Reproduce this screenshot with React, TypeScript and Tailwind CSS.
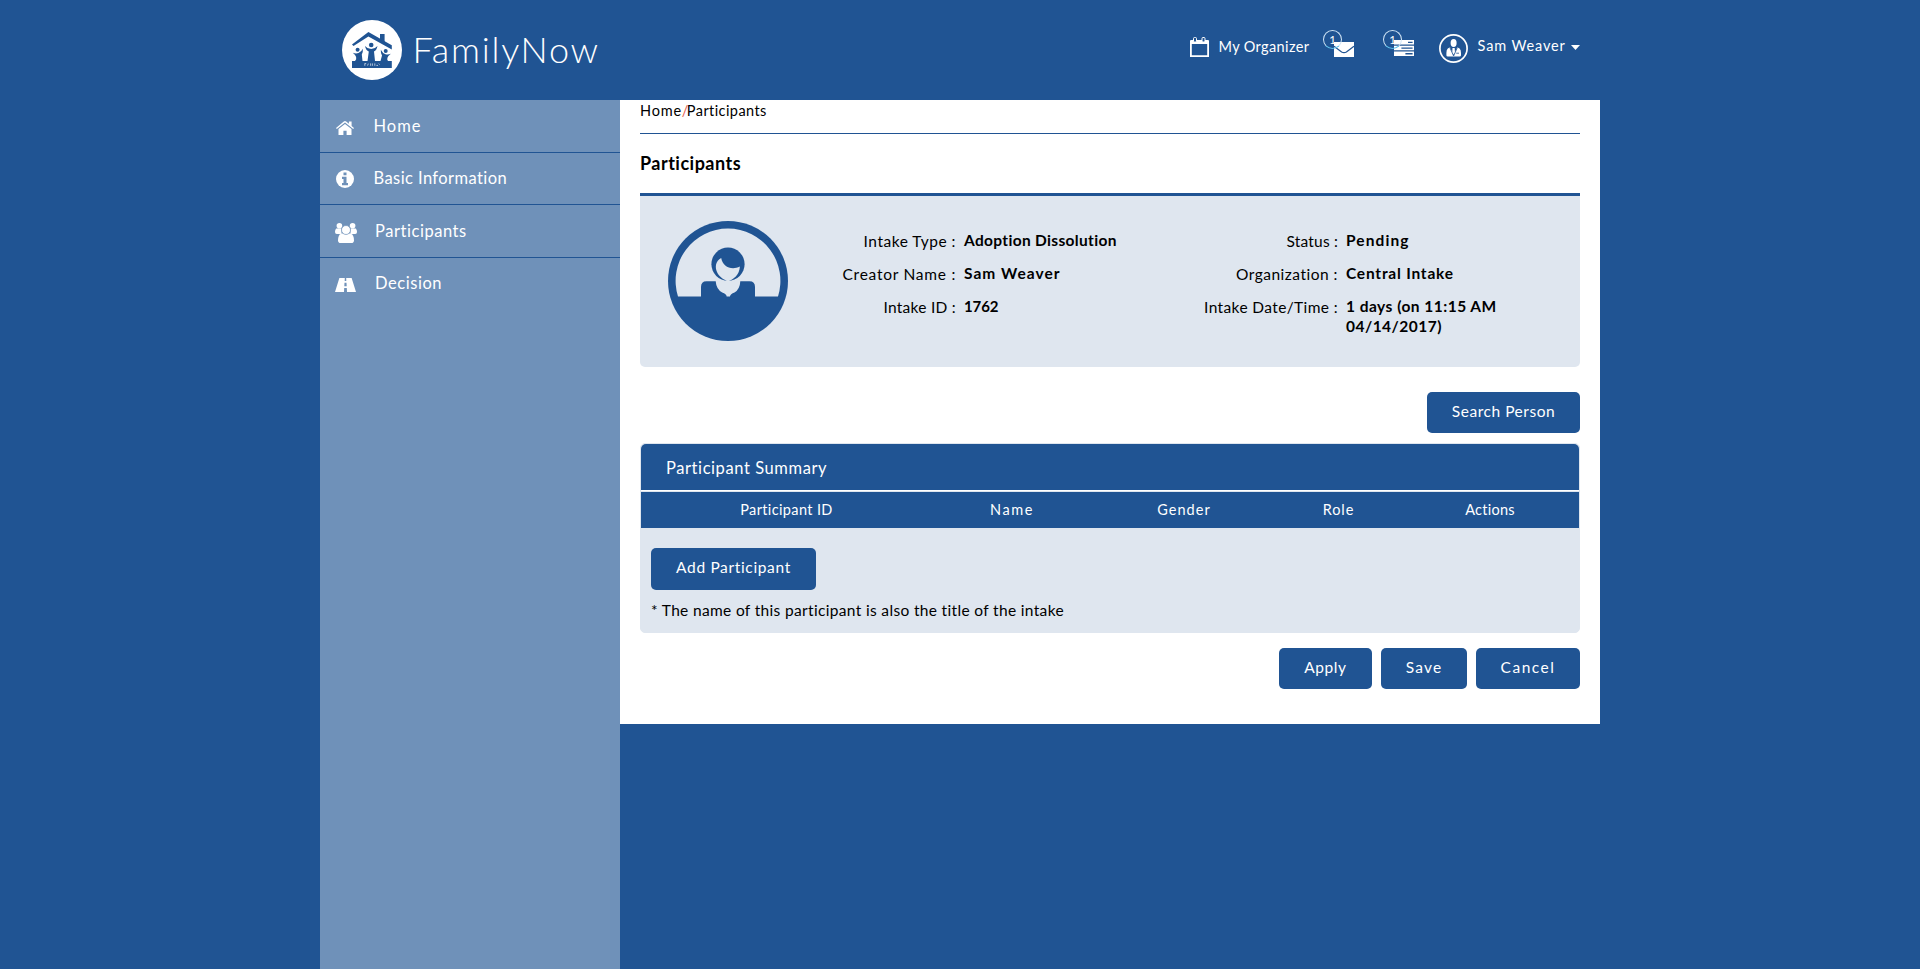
import React from "react";

function Logo() {
  return (
    <svg viewBox="0 0 60 60" className="h-[60px] w-[60px] shrink-0">
      <circle cx="30" cy="30" r="30" fill="#fff" />
      <g fill="#205493">
        <path d="M26.4 12 L49.8 25.2 V29.4 L26.4 16.6 L11.5 26 L10 24.6 Z" />
        <path d="M38 14 H42.6 V22.5 L38 20 Z" />
        <circle cx="29.2" cy="25" r="2.3" />
        <circle cx="15.6" cy="29.7" r="2" />
        <circle cx="43.7" cy="31" r="2" />
        <path d="M23 26 Q25.5 29 29.2 29 Q33 29 35.5 26 Q34.5 30.5 32 31.5 L33 41 H25.5 L26.8 31.5 Q24 30.5 23 26 Z" />
        <path d="M10.8 32.8 Q14 34 16.5 33 Q19.5 32 20.8 28.8 Q21.2 32 19.8 34.5 L20.5 41 H13 Q16.5 37.5 10.8 32.8 Z" />
        <path d="M48.8 33.8 Q46 35 43.5 34.2 Q40.5 33.2 38.8 29.8 Q38.6 33 40 35.5 L38.5 41 H46 Q43.5 38 48.8 33.8 Z" />
        <rect x="10" y="41" width="39.8" height="7" />
      </g>
      <g stroke="#fff" strokeWidth="0.8" opacity="0.8">
        <path d="M22.8 43.4 v2.4 M22.8 43.6 h1.4 M25.6 45.6 l0.7 -2 M28.6 43.4 v2.4 M30.4 43.4 v2.4 M32.8 43.4 v2.4 M34.4 45.4 h1.6 M36.8 43.6 l0.8 1" />
      </g>
    </svg>
  );
}

function CalendarIcon() {
  return (
    <svg viewBox="0 0 19 20" className="h-5 w-[19px]">
      <path fill="#fff" fillRule="evenodd" d="M1 3 H18 Q19 3 19 4 V20 H0 V4 Q0 3 1 3 Z M1.8 7 V18.2 H17.2 V7 Z" />
      <rect x="3.5" y="0.5" width="3" height="4.5" rx="1" fill="#205493" stroke="#fff" />
      <rect x="12" y="0.5" width="3" height="4.5" rx="1" fill="#205493" stroke="#fff" />
    </svg>
  );
}

function MailIcon() {
  return (
    <svg viewBox="0 0 20 15" className="h-[15px] w-5">
      <rect width="20" height="15" fill="#fff" />
      <path d="M0 4.2 L7.6 10 Q10 11.4 12.4 10 L20 4.2" fill="none" stroke="#205493" strokeWidth="1.2" />
    </svg>
  );
}

function TasksIcon() {
  return (
    <svg viewBox="0 0 20 16" className="h-4 w-5">
      <path fill="#fff" d="M0 0 H20 V4.4 H0 Z M0 5.8 H20 V10.2 H0 Z M0 11.6 H20 V16 H0 Z" />
      <path fill="#205493" d="M14 1.7 H18.6 V2.9 H14 Z M7.4 7.4 H18.6 V8.7 H7.4 Z M11.4 13.1 H18.6 V14.5 H11.4 Z" />
    </svg>
  );
}

function UserIcon() {
  return (
    <svg viewBox="0 0 29 29" className="h-[29px] w-[29px]">
      <circle cx="14.5" cy="14.5" r="13.6" fill="none" stroke="#fff" strokeWidth="1.7" />
      <ellipse cx="14.6" cy="9" rx="3" ry="4" fill="#fff" />
      <path fill="#fff" d="M11 13.2 L14.6 21.5 L18.2 13.2 L20.6 14.6 Q22 16 22 19 V21.2 Q22 22.6 20.6 22.6 H8.8 Q7.4 22.6 7.4 21.2 V19 Q7.4 16 8.8 14.6 Z" />
      <path fill="#fff" d="M13.5 14 H15.7 L16 18.6 L14.6 20.4 L13.2 18.6 Z" />
      <path stroke="#205493" strokeWidth="0.8" fill="none" d="M10.8 13.5 L14.6 22 L18.4 13.5 M17.2 19.2 H20" />
    </svg>
  );
}

function HomeIcon() {
  return (
    <svg viewBox="0 0 18 14" className="h-[14px] w-[18px]">
      <g fill="#fff">
        <path d="M9 0 Q9.6 0 10.2 0.5 L12.9 2.7 V0.4 H15.6 V4.9 L18 6.9 L17.2 7.9 L9 1.5 L0.8 7.9 L0 6.9 L7.8 0.5 Q8.4 0 9 0 Z" />
        <path d="M9 2.9 L15.5 8 V14 H10.6 V9.8 H7.4 V14 H2.5 V8 Z" />
      </g>
    </svg>
  );
}

function InfoIcon() {
  return (
    <svg viewBox="0 0 18 18" className="h-[18px] w-[18px]">
      <circle cx="9" cy="9" r="9" fill="#fff" />
      <path fill="#6f91b9" d="M7.5 2.6 H10.5 V5.2 H7.5 Z M6 6.8 H10.5 V13 H12 V15.2 H6 V13 H7.5 V9 H6 Z" />
    </svg>
  );
}

function PeopleIcon() {
  return (
    <svg viewBox="0 0 22 20" className="h-5 w-[22px]">
      <g fill="#fff">
        <circle cx="4.4" cy="2.8" r="2.8" />
        <circle cx="17.6" cy="2.8" r="2.8" />
        <path d="M1.2 5.4 H6.5 V11 H1.8 Q0 11 0 9 Q0 6.4 1.2 5.4 Z" />
        <path d="M20.8 5.4 H15.5 V11 H20.2 Q22 11 22 9 Q22 6.4 20.8 5.4 Z" />
        <path d="M6.2 10.6 H15.8 Q19 12.4 19 17.2 Q19 20 16.4 20 H5.6 Q3 20 3 17.2 Q3 12.4 6.2 10.6 Z" />
      </g>
      <circle cx="11" cy="7" r="4.5" fill="#fff" stroke="#6f91b9" strokeWidth="0.7" />
    </svg>
  );
}

function RoadIcon() {
  return (
    <svg viewBox="0 0 21 14" className="h-[14px] w-[21px]">
      <path fill="#fff" d="M4.4 0 H16.6 L21 14 H0 Z" />
      <path fill="#6f91b9" d="M9.8 0 H11.2 L11.3 3 H9.7 Z M9.5 4.8 H11.5 L11.7 8.2 H9.3 Z M9.2 10 H11.8 L12 14 H9 Z" />
    </svg>
  );
}

function Avatar() {
  return (
    <svg viewBox="0 0 120 120" className="h-[120px] w-[120px] shrink-0">
      <circle cx="60" cy="60" r="60" fill="#205493" />
      <path fill="#dfe6ef" d="M10 75.6 A52.4 52.4 0 1 1 110 75.6 H87 V66 Q87 60.2 81.5 60.2 H72.3 Q72 68 66.5 71.5 Q62.3 73 62 75.6 H58.7 Q58.4 73 54.2 71.5 Q48.2 68 47.7 60.2 H38.5 Q33 60.2 33 66 V75.6 Z" />
      <circle cx="60" cy="43.2" r="16.6" fill="#205493" />
      <path fill="#dfe6ef" d="M53.2 37 C47.5 40 46.8 46 49 51 C51 55.8 55.5 58.6 60 60.4 C65.5 58.4 71.4 54.5 71.9 45.6 C63.5 49.4 54.6 46 53.2 37 Z" />
    </svg>
  );
}

function Badge({ children }: { children: React.ReactNode }) {
  return (
    <span className="absolute top-0 -left-[11px] flex h-[19px] w-[19px] items-center justify-center rounded-full border border-[#cfe4f5] border-b-[#5fc0ea] text-[11.5px] leading-none text-white">
      {children}
    </span>
  );
}

const nav = [
  { label: "Home", icon: <HomeIcon />, row: "h-[53px] border-b pl-4 gap-[19.5px]", text: "tracking-[1px]", nudge: "mt-1" },
  { label: "Basic Information", icon: <InfoIcon />, row: "h-[52px] border-b pl-4 gap-[19.5px] pb-[1px]", text: "tracking-[0.42px]", nudge: "mt-[2px]" },
  { label: "Participants", icon: <PeopleIcon />, row: "h-[53px] border-b pl-[15px] gap-[18px] pb-[1px]", text: "tracking-[0.55px]", nudge: "mt-1" },
  { label: "Decision", icon: <RoadIcon />, row: "h-[52px] pl-[15px] gap-[19px] pb-[3px]", text: "tracking-[0.55px]", nudge: "mt-[5px]" },
];

const details = [
  [
    { label: "Intake Type :", lt: "tracking-[0.52px]", value: "Adoption Dissolution", vt: "tracking-[0.33px]" },
    { label: "Creator Name :", lt: "tracking-[0.74px]", value: "Sam Weaver", vt: "tracking-[1.03px]" },
    { label: "Intake ID :", lt: "tracking-[0.27px]", value: "1762", vt: "text-[15px] tracking-[-0.1px]" },
  ],
  [
    { label: "Status :", lt: "tracking-[0.18px]", value: "Pending", vt: "tracking-[1.09px]" },
    { label: "Organization :", lt: "tracking-[0.5px]", value: "Central Intake", vt: "tracking-[0.78px]" },
    { label: "Intake Date/Time :", lt: "tracking-[0.38px]", value: "1 days (on 11:15 AM 04/14/2017)", vt: "tracking-[0.48px]" },
  ],
];

const columns = [
  { label: "Participant ID", cls: "w-[291px] tracking-[0.37px]" },
  { label: "Name", cls: "w-[158px] pl-[2px] tracking-[1.6px]" },
  { label: "Gender", cls: "w-[188px] tracking-[1.06px]" },
  { label: "Role", cls: "w-[121px] tracking-[0.84px]" },
  { label: "Actions", cls: "w-[180px] pl-[2px] tracking-[0.25px]" },
];

function Button({ children, className }: { children: React.ReactNode; className: string }) {
  return (
    <button className={`flex items-center justify-center rounded-[5px] bg-[#205493] text-[15.5px] text-white ${className}`}>
      {children}
    </button>
  );
}

export default function App() {
  return (
    <div className="min-h-[969px] bg-[#205493] font-[Lato,sans-serif] text-black">
      <div className="mx-auto flex h-[969px] w-[1280px] flex-col">
        <header className="flex h-[100px] shrink-0 items-start pl-[22px] text-white">
          <div className="mt-5">
            <Logo />
          </div>
          <div className="mt-[28px] ml-[10.5px] w-[190px] text-[36px] leading-[43px] font-light tracking-[1.75px] whitespace-nowrap">FamilyNow</div>
          <div className="ml-auto flex items-start text-[14.5px] leading-5 whitespace-nowrap">
            <div className="mt-[37px] w-[19px]">
              <CalendarIcon />
            </div>
            <div className="mt-[37px] ml-[9.5px] w-[115.5px] tracking-[0.38px]">My Organizer</div>
            <div className="relative mt-[30px] w-[60px] pt-[12px]">
              <MailIcon />
              <Badge>1</Badge>
            </div>
            <div className="relative mt-[30px] w-[45px] pt-[10px]">
              <TasksIcon />
              <Badge>1</Badge>
            </div>
            <div className="mt-[34px] w-[29px]">
              <UserIcon />
            </div>
            <div className="mt-9 ml-[9.5px] w-[93.5px] tracking-[0.87px]">Sam Weaver</div>
            <svg viewBox="0 0 9 5" className="mt-[45px] mr-[20px] h-[5px] w-[9px]">
              <path d="M0 0 H9 L4.5 5 Z" fill="#fff" />
            </svg>
          </div>
        </header>
        <div className="flex flex-1 items-stretch">
          <nav className="w-[300px] bg-[#6f91b9] text-[16.5px] text-white">
            {nav.map((n) => (
              <div key={n.label} className={`flex items-center border-[#205493] ${n.row}`}>
                <span className={`shrink-0 ${n.nudge}`}>{n.icon}</span>
                <span className={`leading-5 ${n.text}`}>{n.label}</span>
              </div>
            ))}
          </nav>
          <main className="h-[624px] w-[980px] bg-white px-5">
            <div className="flex h-[34px] border-b border-[#205493] text-[14.5px] leading-[21px]">
              <span className="tracking-[0.8px]">Home</span>
              <span className="w-[5px] text-center text-[#e8604f]">/</span>
              <span className="tracking-[0.42px]">Participants</span>
            </div>
            <h1 className="h-[59px] pt-[18px] text-[18px] leading-[22px] font-bold tracking-[0.49px]">Participants</h1>
            <section className="flex h-[174px] rounded-b-[5px] border-t-[3px] border-[#205493] bg-[#dfe6ef] pt-[25px] pl-7">
              <Avatar />
              <div className="flex pt-[9px] text-[15.5px] leading-5">
                {details.map((group, i) => (
                  <dl key={i} className={i === 0 ? "flex w-[390px] flex-col gap-3" : "flex w-[382px] flex-col gap-3"}>
                    {group.map((d) => (
                      <div key={d.label} className="flex">
                        <dt className={`pt-[1px] text-right whitespace-nowrap ${i === 0 ? "w-[168px]" : "w-[160px]"} ${d.lt}`}>{d.label}</dt>
                        <dd className={`ml-2 w-[180px] font-bold ${d.vt}`}>{d.value}</dd>
                      </div>
                    ))}
                  </dl>
                ))}
              </div>
            </section>
            <div className="flex justify-end pt-[25px]">
              <Button className="h-[41px] w-[153px] pb-[1px] tracking-[0.54px]">Search Person</Button>
            </div>
            <section className="mt-[10px] h-[190px] rounded-[5px] border border-[#dfe6ef] bg-[#dfe6ef]">
              <h2 className="h-[46px] rounded-t-[5px] bg-[#205493] pl-[25px] text-[16.5px] leading-[48px] tracking-[0.58px] text-white">Participant Summary</h2>
              <div className="h-[2px] border-t border-white" />
              <div className="flex h-9 bg-[#205493] text-center text-[14.5px] leading-[35px] text-white">
                {columns.map((c) => (
                  <div key={c.label} className={c.cls}>{c.label}</div>
                ))}
              </div>
              <div className="pt-5 pl-[10px]">
                <Button className="h-[42px] w-[165px] pb-[2px] tracking-[0.655px]">Add Participant</Button>
                <p className="mt-[10px] text-[15.5px] leading-5 tracking-[0.34px]">* The name of this participant is also the title of the intake</p>
              </div>
            </section>
            <div className="flex justify-end gap-[9px] pt-[15px]">
              <Button className="h-[41px] w-[93px] pb-[1px] tracking-[0.56px]">Apply</Button>
              <Button className="h-[41px] w-[86px] pb-[1px] tracking-[1.2px]">Save</Button>
              <Button className="h-[41px] w-[104px] pb-[1px] tracking-[1.5px]">Cancel</Button>
            </div>
          </main>
        </div>
      </div>
    </div>
  );
}
